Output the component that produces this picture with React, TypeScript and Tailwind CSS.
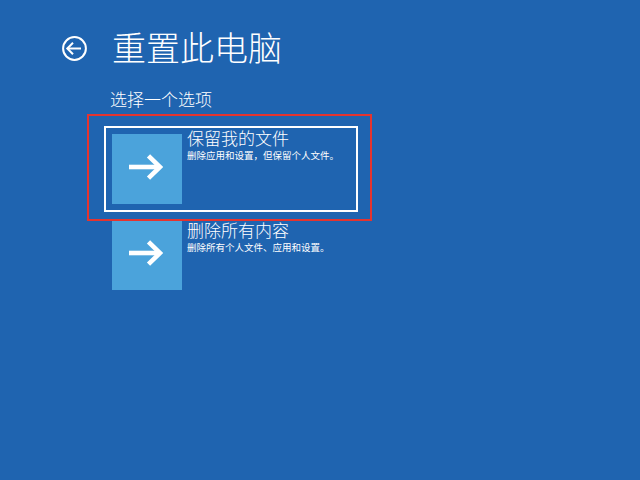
import React from "react";

function ArrowTile() {
  return (
    <div className="w-[70px] h-[70px] bg-[#4ba3db] flex items-start pl-[17px] pt-[20px] shrink-0">
      <svg width="34" height="26" viewBox="0 0 34 26" fill="none">
        <path d="M0 13 H30" stroke="white" strokeWidth="4.6" />
        <path d="M19.5 1.8 L31 13 L19.5 24.2" stroke="white" strokeWidth="4.6" strokeLinejoin="miter" />
      </svg>
    </div>
  );
}

export default function App() {
  return (
    <div
      className="relative w-[640px] h-[480px] overflow-hidden bg-[#1f64b0] text-white"
      style={{ fontFamily: '"Noto Sans CJK SC", "Noto Sans", sans-serif' }}
    >
      <div className="flex items-center pl-[62px] pt-[30px]">
        <svg width="25" height="25" viewBox="0 0 25 25" fill="none" className="mt-[3px] shrink-0">
          <circle cx="12.5" cy="12.5" r="11.4" stroke="white" strokeWidth="2" />
          <path d="M5.5 12.5 H19" stroke="white" strokeWidth="2" />
          <path d="M11 6.8 L5.3 12.5 L11 18.2" stroke="white" strokeWidth="2" />
        </svg>
        <h1 className="ml-[25px] text-[34px] leading-[34px] font-light">重置此电脑</h1>
      </div>

      <div className="ml-[110px] mt-[26px] text-[17px] leading-[17px] font-light">选择一个选项</div>

      <div className="ml-[104px] mt-[19px] flex flex-col">
        <div className="w-[254px] border-2 border-white flex pl-[6px] pb-[6px]">
          <div className="mt-[6px]">
            <ArrowTile />
          </div>
          <div className="ml-[5px] pt-[1px] flex flex-col">
            <div className="text-[17px] leading-[17px] font-light">保留我的文件</div>
            <div className="mt-[4px] text-[9.5px] leading-[10px] font-normal">删除应用和设置，但保留个人文件。</div>
          </div>
        </div>
        <div className="w-[254px] border-2 border-transparent flex pl-[6px] pb-[6px]">
          <div className="mt-[6px]">
            <ArrowTile />
          </div>
          <div className="ml-[5px] pt-[7px] flex flex-col">
            <div className="text-[17px] leading-[17px] font-light">删除所有内容</div>
            <div className="mt-[4px] text-[9.5px] leading-[10px] font-normal">删除所有个人文件、应用和设置。</div>
          </div>
        </div>
      </div>

      <div className="absolute left-[87px] top-[114px] w-[285px] h-[107px] border-2 border-[#e5342f]" />
    </div>
  );
}
